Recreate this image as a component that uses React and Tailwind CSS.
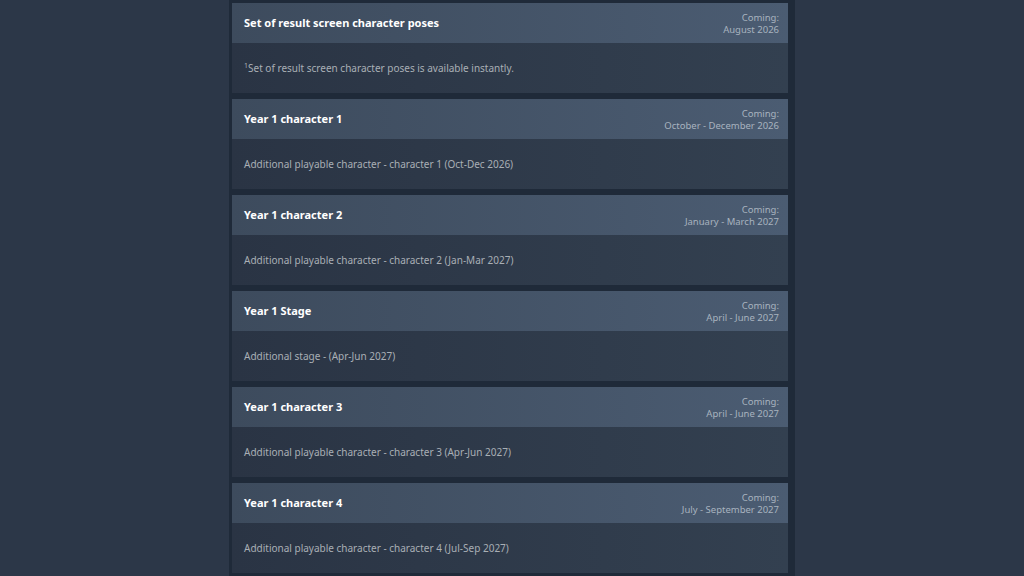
import React from 'react';

const items = [
  {
    title: 'Set of result screen character poses',
    date: 'August 2026',
    desc: (
      <>
        <sup className="text-[7px]">1</sup>Set of result screen character poses is available instantly.
      </>
    ),
  },
  { title: 'Year 1 character 1', date: 'October - December 2026', desc: 'Additional playable character - character 1 (Oct-Dec 2026)' },
  { title: 'Year 1 character 2', date: 'January - March 2027', desc: 'Additional playable character - character 2 (Jan-Mar 2027)' },
  { title: 'Year 1 Stage', date: 'April - June 2027', desc: 'Additional stage - (Apr-Jun 2027)' },
  { title: 'Year 1 character 3', date: 'April - June 2027', desc: 'Additional playable character - character 3 (Apr-Jun 2027)' },
  { title: 'Year 1 character 4', date: 'July - September 2027', desc: 'Additional playable character - character 4 (Jul-Sep 2027)' },
];

function ContentItem({ title, date, desc }) {
  return (
    <div className="mb-1.5">
      <div className="h-10 flex items-center justify-between pl-3 pr-[9px] bg-gradient-to-r from-[#3d4b5d] to-[#4b5c72]">
        <h3 className="text-[11px] font-bold text-white">{title}</h3>
        <div className="text-right text-[9.5px] leading-[12px] text-[#a8b3bf] pt-[2px]">
          <div>Coming:</div>
          <div>{date}</div>
        </div>
      </div>
      <div className="h-[50px] flex items-center px-3 bg-gradient-to-r from-[#2a3444] to-[#334050]">
        <p className="text-[10px] text-[#a9afb5]">{desc}</p>
      </div>
    </div>
  );
}

export default function App() {
  return (
    <div className="w-[1024px] h-[576px] overflow-hidden bg-[#2c3748] flex justify-center" style={{ fontFamily: '"Noto Sans", Arial, sans-serif' }}>
      <div className="w-[566px] bg-[#1f2a39] pt-[3px] pl-[3px] pr-[7px]">
        {items.map((item) => (
          <ContentItem key={item.title} {...item} />
        ))}
      </div>
    </div>
  );
}
